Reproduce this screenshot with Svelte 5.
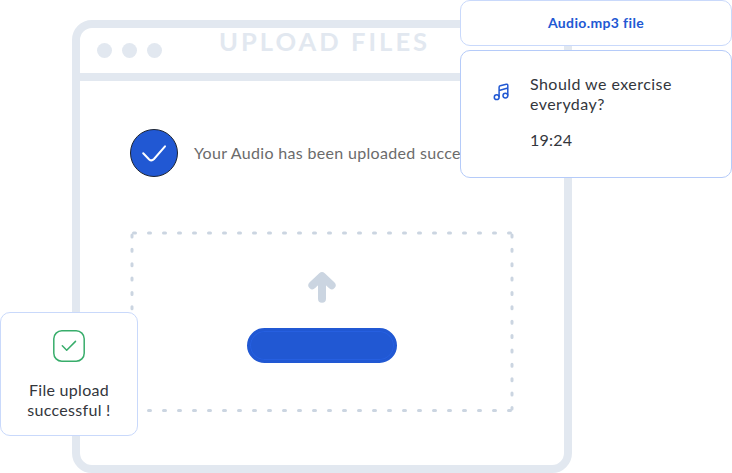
<script>
  const dots = [0, 1, 2];
</script>

<main class="scene">
  <section class="window">
    <header class="titlebar">
      <div class="dots">
        {#each dots as dot (dot)}<i></i>{/each}
      </div>
      <h1>UPLOAD FILES</h1>
    </header>
    <div class="body">
      <div class="status">
        <svg width="48" height="48" viewBox="0 0 48 48" fill="none">
          <circle cx="24" cy="24" r="23.5" fill="#2158d3" stroke="#1d2433" />
          <path d="M13.2 24.3 L19.2 30.5 Q21.6 32.5 24 30 L35 17.3" stroke="#fff" stroke-width="2" stroke-linecap="round" stroke-linejoin="round" />
        </svg>
        <p>Your Audio has been uploaded successfully</p>
      </div>
      <div class="dropzone">
        <svg class="dashes" width="384" height="182" viewBox="0 0 384 182" fill="none" stroke="#cbd5e1" stroke-width="3" stroke-linecap="round">
          <path d="M3.5 3H382M3.5 180.5H382" stroke-dasharray="2 13" />
          <path d="M2 5V179M382 5V179" stroke-dasharray="2 12.37" />
        </svg>
        <svg class="arrow" width="28" height="32" viewBox="0 0 28 32" fill="none" stroke="#cbd5e1" stroke-width="8" stroke-linecap="round" stroke-linejoin="round">
          <path d="M4.4 14.2L14 5.2L23.6 14.2M14 6V27.7" />
        </svg>
        <button aria-label="Upload"></button>
      </div>
    </div>
  </section>

  <aside class="audio">
    <div class="card filename">Audio.mp3 file</div>
    <div class="card detail">
      <svg width="18" height="18" viewBox="0 0 18 18" fill="none" stroke="#2158d3" stroke-width="1.5" stroke-linejoin="round">
        <circle cx="3.7" cy="14.2" r="2.4" />
        <circle cx="12.4" cy="12.6" r="2.4" />
        <path d="M6.1 14.2V4.2Q6.1 3.1 7.2 2.8L13.2 1.3Q14.8 .9 14.8 2.5V12.6M6.1 7.4L14.8 5.1" />
      </svg>
      <div class="copy">
        <p class="question">Should we exercise<br />everyday?</p>
        <p class="time">19:24</p>
      </div>
    </div>
  </aside>

  <aside class="card done">
    <svg width="32" height="32" viewBox="0 0 32 32" fill="none" stroke="#38ad6b" stroke-width="1.5" stroke-linecap="round" stroke-linejoin="round">
      <rect x=".8" y=".8" width="30.4" height="30.4" rx="8" />
      <path d="M9.3 15.8L13.7 20.2L22.5 11.4" />
    </svg>
    <p>File upload<br />successful !</p>
  </aside>
</main>

<style>
  :global(body) {
    margin: 0;
    background: #fff;
  }
  * {
    box-sizing: border-box;
  }
  p,
  h1 {
    margin: 0;
  }
  svg {
    display: block;
    flex: none;
  }
  .scene {
    position: relative;
    width: 732px;
    height: 473px;
    overflow: hidden;
    padding: 20px 0 0 72px;
    font-family: Lato, "Open Sans", sans-serif;
    font-size: 16px;
    line-height: 20px;
    color: #33363c;
  }
  .window {
    width: 500px;
    height: 453px;
    border: 8px solid #e2e8f0;
    border-radius: 20px;
    background: #fff;
  }
  .titlebar {
    display: flex;
    height: 53px;
    border-bottom: 8px solid #e2e8f0;
    padding-left: 17px;
  }
  .dots {
    display: flex;
    gap: 10px;
    padding-top: 15px;
  }
  .dots i {
    width: 15px;
    height: 15px;
    border-radius: 50%;
    background: #e2e8f0;
  }
  h1 {
    margin-left: 57px;
    font-size: 25.5px;
    line-height: 26px;
    letter-spacing: 3.05px;
    color: #e2e8f0;
    white-space: nowrap;
  }
  .body {
    padding: 48px 0 0 50px;
  }
  .status {
    display: flex;
    align-items: center;
    gap: 16px;
    color: #6b6b6b;
    white-space: nowrap;
  }
  .status p {
    letter-spacing: 0.32px;
  }
  .dropzone {
    position: relative;
    display: flex;
    flex-direction: column;
    align-items: center;
    width: 384px;
    height: 182px;
    margin-top: 53px;
    padding-top: 41px;
  }
  .dashes {
    position: absolute;
    inset: 0;
  }
  button {
    width: 150px;
    height: 35px;
    margin-top: 25px;
    padding: 0;
    border: 3px solid #2158d3;
    border-radius: 18px;
    background: #2158d3;
    box-shadow: inset 0 0 0 1px #265fe0;
  }
  .card {
    border: 1px solid #c9d9fb;
    border-radius: 10px;
    background: #fff;
  }
  .audio {
    position: absolute;
    top: 0;
    left: 460px;
    width: 272px;
    display: flex;
    flex-direction: column;
    gap: 4px;
  }
  .filename {
    height: 46px;
    text-align: center;
    font-size: 14px;
    font-weight: 700;
    line-height: 43px;
    letter-spacing: 0.37px;
    color: #2158d3;
  }
  .detail {
    display: flex;
    height: 128px;
    padding: 23px 0 0 32px;
    border-color: #b5cbf9;
  }
  .detail svg {
    margin-top: 9px;
  }
  .copy {
    margin-left: 19px;
    letter-spacing: 0.45px;
  }
  .time {
    margin-top: 16px;
    letter-spacing: 0.2px;
  }
  .done {
    position: absolute;
    left: 0;
    top: 312px;
    width: 138px;
    height: 124px;
    display: flex;
    flex-direction: column;
    align-items: center;
    gap: 18px;
    padding-top: 17px;
    text-align: center;
    letter-spacing: 0.3px;
  }
</style>
